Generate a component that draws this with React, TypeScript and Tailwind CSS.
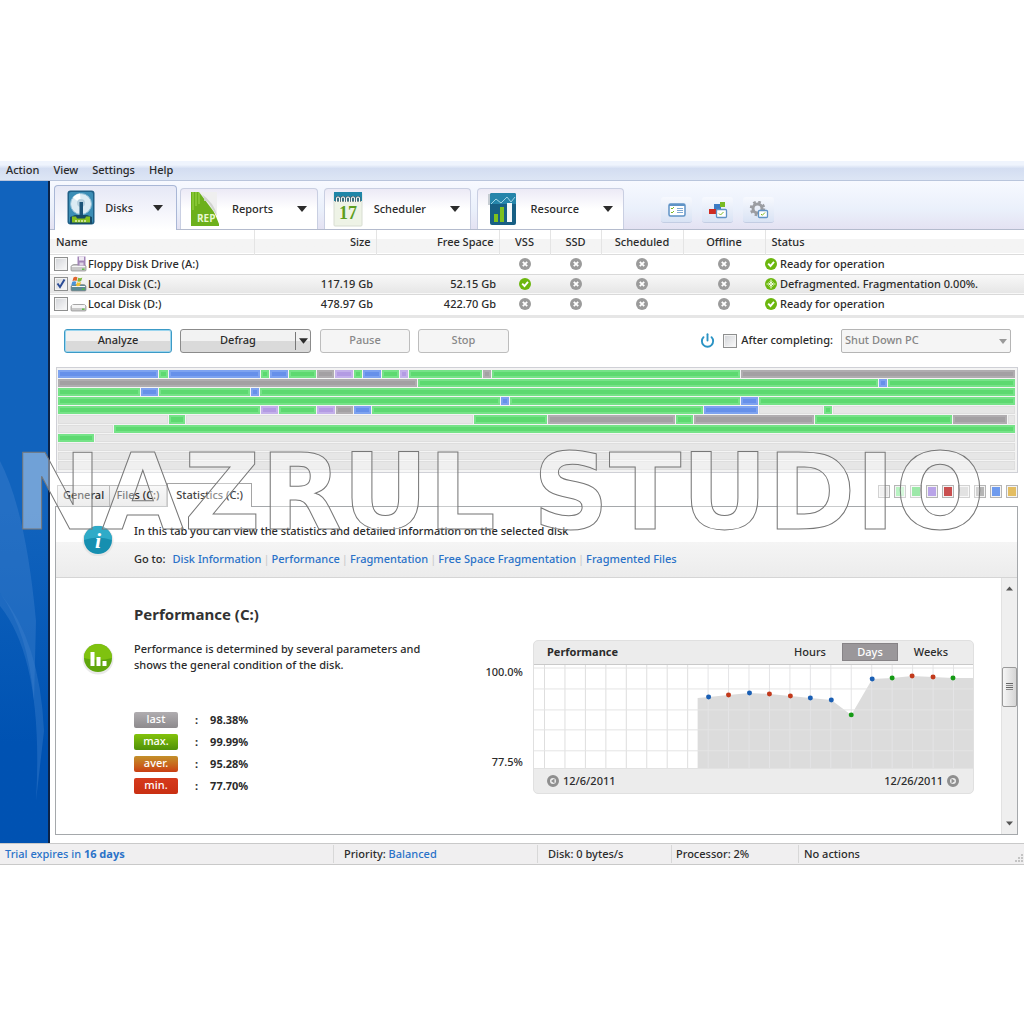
import type { ReactNode } from 'react';
import { Power } from 'lucide-react';

type Seg = [string, number];

const GREEN = 'bg-[#5dd970] shadow-[inset_0_0_0_2px_#76e388]';
const BLUE = 'bg-[#6690ea] shadow-[inset_0_0_0_2px_#7ea3f0]';
const GRAY = 'bg-[#a3a0a3] shadow-[inset_0_0_0_2px_#b0adb0]';
const PURPLE = 'bg-[#b39be3] shadow-[inset_0_0_0_2px_#c3b0ea]';
const EMPTY = 'bg-[#e6e6e6] shadow-[inset_0_0_0_1px_#dedede]';

const MAP_WIDTH = 956;

// each segment: colour, share of the row
const mapRows: Seg[][] = [
  [[BLUE, 101], [GREEN, 10], [BLUE, 92], [GREEN, 9], [BLUE, 19], [GREEN, 27], [GRAY, 18], [PURPLE, 19], [GREEN, 9], [BLUE, 19], [GREEN, 18], [PURPLE, 9], [GREEN, 74], [GRAY, 9], [GREEN, 249], [GRAY, 274]],
  [[GRAY, 359], [GREEN, 460], [BLUE, 9], [GREEN, 128]],
  [[GREEN, 83], [BLUE, 18], [GREEN, 92], [BLUE, 9], [GREEN, 754]],
  [[GREEN, 442], [BLUE, 9], [GREEN, 231], [BLUE, 18], [GREEN, 256]],
  [[GREEN, 203], [PURPLE, 18], [GREEN, 37], [PURPLE, 19], [GRAY, 18], [BLUE, 18], [GREEN, 332], [BLUE, 55], [EMPTY, 64], [GREEN, 9], [EMPTY, 183]],
  [[EMPTY, 111], [GREEN, 17], [EMPTY, 287], [GREEN, 74], [GRAY, 128], [GREEN, 18], [GRAY, 120], [GREEN, 138], [GRAY, 55], [EMPTY, 8]],
  [[EMPTY, 56], [GREEN, 900]],
  [[GREEN, 37], [EMPTY, 919]],
  [[EMPTY, 956]],
  [[EMPTY, 956]],
  [[EMPTY, 956]],
];

const disks = [
  { name: 'Floppy Disk Drive (A:)', size: '', free: '', vss: false, status: 'Ready for operation', kind: 'floppy' },
  { name: 'Local Disk (C:)', size: '117.19 Gb', free: '52.15 Gb', vss: true, status: 'Defragmented. Fragmentation 0.00%.', kind: 'system' },
  { name: 'Local Disk (D:)', size: '478.97 Gb', free: '422.70 Gb', vss: false, status: 'Ready for operation', kind: 'local' },
];

const stats = [
  { label: 'last', value: '98.38%', color: 'bg-linear-to-b from-[#b0adb0] to-[#8d8a8d]' },
  { label: 'max.', value: '99.99%', color: 'bg-linear-to-b from-[#83c30b] to-[#4f9108]' },
  { label: 'aver.', value: '95.28%', color: 'bg-linear-to-b from-[#c2902a] to-[#c93c12]' },
  { label: 'min.', value: '77.70%', color: 'bg-linear-to-b from-[#d63a1c] to-[#c92f12]' },
];

const legend = ['bg-[#e8e8e8]', 'bg-[#b9f3c3]', 'bg-[#5dd970]', 'bg-[#b9a4e8]', 'bg-[#c94f4f]', 'bg-[#cfcfcf]', 'bg-[#b5b5b5]', 'bg-[#6f9bee]', 'bg-[#e3bd62]'];

const points: [number, number, string][] = [
  [175, 32, '#1a5fb4'], [195, 30, '#c23a1c'], [216, 28, '#1a5fb4'], [236, 29, '#c23a1c'], [257, 31, '#c23a1c'], [277, 33, '#1a5fb4'], [298, 35, '#1a5fb4'],
  [318, 50, '#159a15'], [339, 14, '#1a5fb4'], [359, 13, '#159a15'], [379, 11, '#c23a1c'], [400, 12, '#c23a1c'], [420, 13, '#159a15'],
];

const links = ['Disk Information', 'Performance', 'Fragmentation', 'Free Space Fragmentation', 'Fragmented Files'];

function Check({ id, label, checked }: { id: string; label?: string; checked?: boolean }) {
  return (
    <span className="relative inline-flex h-[14px] w-[14px] shrink-0">
      <input id={id} type="checkbox" defaultChecked={checked} aria-label={label} className="peer h-[14px] w-[14px] appearance-none border border-[#8e8f8f] bg-linear-to-br from-[#d2d4d8] to-[#fbfbfb] shadow-[inset_0_0_0_1px_#f4f4f4]" />
      <svg viewBox="0 0 14 14" className="pointer-events-none absolute inset-0 hidden peer-checked:block">
        <path d="M3.5 6.5 6 10l4.5-7.5" fill="none" stroke="#2b4c96" strokeWidth="2" />
      </svg>
    </span>
  );
}

function Cross() {
  return (
    <svg viewBox="0 0 12 12" className="mx-auto h-3 w-3">
      <circle cx="6" cy="6" r="6" fill="#9b9b9b" />
      <path d="M3.8 3.8l4.4 4.4M8.2 3.8 3.8 8.2" stroke="#fff" strokeWidth="1.8" />
    </svg>
  );
}

function Tick() {
  return (
    <svg viewBox="0 0 12 12" className="mx-auto h-3 w-3 shrink-0">
      <circle cx="6" cy="6" r="6" fill="#6cb70e" />
      <path d="M3.2 5.6 5.5 8 9 3.8" fill="none" stroke="#fff" strokeWidth="1.9" />
    </svg>
  );
}

function Defragged() {
  return (
    <svg viewBox="0 0 12 12" className="h-3 w-3 shrink-0">
      <circle cx="6" cy="6" r="6" fill="#6cb70e" />
      <path d="M6 1.5v9M1.5 6h9" stroke="#e4f5c8" strokeWidth="1.2" />
      <path d="M4.5 3.5 6 5l1.5-1.5M4.5 8.5 6 7l1.5 1.5M3.5 4.5 5 6 3.5 7.5M8.5 4.5 7 6l1.5 1.5" fill="none" stroke="#fff" strokeWidth=".8" />
    </svg>
  );
}

function DriveIcon({ kind }: { kind: string }) {
  return (
    <svg viewBox="0 0 17 16" className="h-4 w-[17px] shrink-0">
      <path d="M1 10.5Q2 8.5 4 8.5h9.5q2 0 2.5 2v3.5q0 1-1 1H2q-1 0-1-1z" fill={kind === 'system' ? '#5c8a94' : '#c9c9c9'} stroke="#8a8a8a" strokeWidth=".7" />
      <path d="M2 10.5h13" stroke="#f6f6f6" strokeWidth={kind === 'local' ? 3 : 1} />
      <path d="M12 13.2h2.5" stroke="#4fbf3a" strokeWidth="1.3" />
      {kind === 'floppy' && (
        <>
          <path d="M7.5.5h8v9h-8z" fill="#a386b8" />
          <path d="M9 .5h5v4H9z" fill="#f0ebf4" />
          <path d="M9.5 6.5h4v3h-4z" fill="#ddd3e4" />
        </>
      )}
      {kind === 'system' && (
        <>
          <path d="M3.5 1.5q2-1.5 4 0L6.5 5q-2-1-4 0z" fill="#e0642c" />
          <path d="M8.3 1.8q2 1 4-.3L11.2 5q-2 1.3-4 .3z" fill="#7fb93c" />
          <path d="M2.3 5.8q2-1 4 0L5.2 9.5q-2-1-4 0z" fill="#4a93d6" />
          <path d="M7 6.2q2 1 4-.3l-1 3.7q-2 1-4 .2z" fill="#f0c02e" />
        </>
      )}
    </svg>
  );
}

function DiskLogo() {
  return (
    <svg viewBox="0 0 28 36" className="h-9 w-7">
      <rect x=".5" y=".5" width="27" height="34" rx="3" fill="#1f5f86" />
      <rect x="2" y="2" width="24" height="31" rx="2" fill="#3b8db5" />
      <circle cx="14" cy="14" r="10.5" fill="#dcebf3" stroke="#8dbdd6" />
      <path d="M14 14 6 7.5A10.5 10.5 0 0 1 13 3.5z" fill="#fff" />
      <circle cx="14" cy="13" r="4" fill="#b7d0de" />
      <path d="M12.5 12H16v14h-3.5z" fill="#1c5478" />
      <path d="M3 27l5-2h12l5 2v7H3z" fill="#174b66" />
      <path d="M5 26.5h4l1 2h8l1-2h4v6H5z" fill="#86bf1c" />
      <path d="M8 31h12" stroke="#e2f0b0" strokeWidth="1.5" strokeDasharray="2 1" />
    </svg>
  );
}

function ReportLogo() {
  return (
    <svg viewBox="0 0 30 36" className="h-9 w-[30px]">
      <path d="M1 1h15l13 32v2H1z" fill="#6cb01c" />
      <path d="M3 1v18M6 1v14M9 1v12" stroke="#8dcc3b" strokeWidth="1.5" />
      <path d="M9 1h18v24z" fill="#efefef" />
      <path d="M9 1q6 4 5 9 3-1 6 4l7 11Q25 12 9 1z" fill="#d2d4d0" />
      <text x="7" y="31" fontSize="10" fontWeight="700" fill="#e8f7cf" fontFamily="Open Sans">REP</text>
    </svg>
  );
}

function CalendarLogo() {
  return (
    <svg viewBox="0 0 30 36" className="h-9 w-[30px]">
      <rect x="1" y="2" width="28" height="33" rx="1" fill="#eef3e6" stroke="#d8ddd2" />
      <path d="M1 1h28v9H1z" fill="#1f86a8" />
      {[5, 10, 15, 20, 25].map(x => <path key={x} d={`M${x - 1.5} 11V7q1.5-2 3 0v4`} fill="none" stroke="#41565c" strokeWidth="2.2" />)}
      {[5, 10, 15, 20, 25].map(x => <path key={x} d={`M${x - 1.5} 11V7q1.5-2 3 0v4`} fill="none" stroke="#f3f8f9" strokeWidth="1.1" />)}
      <text x="15" y="28" textAnchor="middle" fontSize="18" fontWeight="700" fill="#5d9f1f" fontFamily="Liberation Serif">17</text>
    </svg>
  );
}

function ResourceLogo() {
  return (
    <svg viewBox="0 0 28 34" className="h-[34px] w-7">
      <path d="M0 2h4v11H0z" fill="#c6ccd2" />
      <rect x="2" y="1" width="26" height="32" rx="2" fill="#175f84" />
      <path d="M2 3q0-2 2-2h22q2 0 2 2v9H2z" fill="#2585aa" />
      <path d="M3 12l5-5 5 4 6-6 4 5 4-5" fill="none" stroke="#9fd4e6" />
      <path d="M6 22h4v8H6zM12 15h4v15h-4z" fill="#7cc01e" />
      <path d="M19 11h5v19h-5z" fill="#f3f8fa" />
    </svg>
  );
}

function Caret({ className }: { className: string }) {
  return <svg viewBox="0 0 10 6" className={className}><path d="M0 0h10L5 6z" fill="currentColor" /></svg>;
}

function MainTab({ label, icon, active, className }: { label: string; icon: ReactNode; active?: boolean; className: string }) {
  return (
    <button role="tab" aria-selected={!!active} className={`flex items-center rounded-t-[4px] border border-b-0 ${className} ${active ? 'z-10 -mb-px h-[45px] border-[#a9b7d6] bg-linear-to-b from-[#e6e8f6] to-white' : 'h-[41px] border-[#c9cfe2] bg-linear-to-b from-[#eceaf6] to-white to-50%'}`}>
      {icon}
      <span className="ml-auto flex items-center">{label}<Caret className={active ? 'ml-5 h-[6px] w-[10px]' : 'ml-6 h-[6px] w-[10px]'} /></span>
    </button>
  );
}

function ToolButton({ label, children }: { label: string; children: ReactNode }) {
  return (
    <button aria-label={label} className="flex h-[26px] w-[31px] items-center justify-center rounded-[3px] border-b border-[#c3cde3] bg-linear-to-b from-[#f7f9fe] to-[#d9e3f4]">
      <svg viewBox="0 0 20 18" className="h-[18px] w-5">{children}</svg>
    </button>
  );
}

function MenuBar() {
  return (
    <nav className="flex h-5 items-center gap-[14px] border-b border-[#b9c5dc] bg-linear-to-b from-[#eff4fd] from-20% via-[#d3ddf1] via-40% to-[#dde6f5] px-[6px] pb-[2px]">
      {['Action', 'View', 'Settings', 'Help'].map(m => <button key={m} className="leading-4">{m}</button>)}
    </nav>
  );
}

function Tabs() {
  return (
    <div className="flex h-[49px] items-end border-b border-[#b4bbcd] bg-linear-to-b from-[#f7f9ff] via-[#eaf0fb] via-60% to-[#e4e2f2] pl-1">
      <div role="tablist" className="flex items-end">
        <MainTab label="Disks" icon={<DiskLogo />} active className="w-[123px] pr-[13px] pl-3" />
        <MainTab label="Reports" icon={<ReportLogo />} className="ml-[3px] w-[138px] pr-[10px] pl-[9px]" />
        <MainTab label="Scheduler" icon={<CalendarLogo />} className="ml-[6px] w-[147px] pr-[10px] pl-[8px]" />
        <MainTab label="Resource" icon={<ResourceLogo />} className="ml-[6px] w-[147px] pr-[10px] pl-[10px]" />
      </div>
      <div className="mb-[6px] ml-[37px] flex gap-[10px]">
        <ToolButton label="Tasks">
          <rect x="2" y="3" width="16" height="12" rx="1.5" fill="#fff" stroke="#5f93c6" strokeWidth="1.5" />
          <path d="M2 4h16" stroke="#5f93c6" strokeWidth="2" />
          <path d="M4 7l1 1 2-2M4 11l1 1 2-2" fill="none" stroke="#7db928" />
          <path d="M10 7.5h6M10 9.5h6M10 11.5h6" stroke="#7fa9d3" />
        </ToolButton>
        <ToolButton label="Map settings">
          <path d="M6 3h7v7H6z" fill="#3d7cc4" />
          <path d="M12 1h5v5h-5z" fill="#79bb22" />
          <path d="M1 8h7v5H1z" fill="#cf2c22" />
          <rect x="8.5" y="8.5" width="10" height="8" rx="1" fill="#fff" stroke="#5f93c6" strokeWidth="1.3" />
          <path d="M11 12.5l1.5 1.5 3-3" fill="none" stroke="#7db928" />
        </ToolButton>
        <ToolButton label="Options">
          <circle cx="8.5" cy="7.5" r="4.5" fill="none" stroke="#9b9da2" strokeWidth="3" />
          <circle cx="8.5" cy="7.5" r="6.5" fill="none" stroke="#9b9da2" strokeWidth="2.5" strokeDasharray="2.6 2.5" />
          <rect x="9.5" y="9.5" width="9" height="7" rx="1" fill="#fff" stroke="#5f93c6" strokeWidth="1.3" />
          <path d="M12 13l1.3 1.3L16 11.5" fill="none" stroke="#7db928" />
        </ToolButton>
      </div>
    </div>
  );
}

function DiskTable() {
  const th = 'border-r border-[#e4e4e4] font-medium';
  return (
    <table className="w-full table-fixed border-collapse border-b-3 border-[#e6e6e6]">
      <colgroup>
        <col className="w-[204px]" /><col className="w-[122px]" /><col className="w-[123px]" /><col className="w-[51px]" /><col className="w-[51px]" /><col className="w-[82px]" /><col className="w-[82px]" /><col />
      </colgroup>
      <thead>
        <tr className="h-6 border-b border-[#dcdcdc] bg-linear-to-b from-white from-40% to-[#f4f4f4] to-40%">
          <th className={`${th} pl-[6px] text-left`}>Name</th>
          <th className={`${th} pr-[5px] text-right`}>Size</th>
          <th className={`${th} pr-[5px] text-right`}>Free Space</th>
          <th className={th}>VSS</th>
          <th className={th}>SSD</th>
          <th className={th}>Scheduled</th>
          <th className={th}>Offline</th>
          <th className="pl-[6px] text-left font-medium">Status</th>
        </tr>
      </thead>
      <tbody>
        {disks.map((d, i) => (
          <tr key={d.name} className={i === 1 ? 'h-5 border-y border-[#d9d9d9] bg-linear-to-b from-[#f8f8f8] to-[#e6e6e6]' : 'h-5'}>
            <td className="pl-1">
              <div className="flex items-center">
                <Check id={`disk-${i}`} label={d.name} checked={i === 1} />
                <span className="mr-px ml-[2px]"><DriveIcon kind={d.kind} /></span>
                {d.name}
              </div>
            </td>
            <td className="pr-[3px] text-right">{d.size}</td>
            <td className="pr-[3px] text-right">{d.free}</td>
            <td>{d.vss ? <Tick /> : <Cross />}</td>
            <td><Cross /></td>
            <td><Cross /></td>
            <td><Cross /></td>
            <td><div className="flex items-center gap-[3px]"><span>{i === 1 ? <Defragged /> : <Tick />}</span>{d.status}</div></td>
          </tr>
        ))}
        <tr className="h-[2px]"><td colSpan={8} /></tr>
      </tbody>
    </table>
  );
}

function Toolbar() {
  const btn = 'h-6 rounded-[3px] border bg-linear-to-b from-[#f2f2f2] from-50% to-[#dadada] to-50%';
  return (
    <div className="flex items-center pt-[11px] pr-[13px] pb-[14px] pl-[14px]">
      <button className={`${btn} w-[108px] border-[#3c9ac6] shadow-[inset_0_0_0_1px_#9bd5ee]`}>Analyze</button>
      <div className={`${btn} ml-2 flex w-[131px] items-center border-[#8b8b8b]`}>
        <button className="h-full flex-1">Defrag</button>
        <button aria-label="Defrag options" className="flex h-[18px] w-[15px] items-center justify-center border-l border-[#777]"><Caret className="h-[6px] w-[9px]" /></button>
      </div>
      <button disabled className="ml-[9px] h-6 w-[90px] rounded-[3px] border border-[#bdbdbd] bg-[#f5f5f5] text-[#888]">Pause</button>
      <button disabled className="ml-2 h-6 w-[91px] rounded-[3px] border border-[#bdbdbd] bg-[#f5f5f5] text-[#888]">Stop</button>
      <div className="ml-auto flex items-center">
        <Power size={15} strokeWidth={3} className="mr-2 text-[#2a93c4]" />
        <Check id="after" />
        <label htmlFor="after" className="ml-1">After completing:</label>
        <div className="relative ml-2">
          <select disabled aria-label="Action after completing" className="h-6 w-[170px] appearance-none rounded-[2px] border border-[#b5b5b5] bg-[#f5f5f5] pl-[3px] text-[#858585] opacity-100">
            <option>Shut Down PC</option>
          </select>
          <Caret className="pointer-events-none absolute top-[10px] right-1 h-[5px] w-2 text-[#999]" />
        </div>
      </div>
    </div>
  );
}

function ClusterMap() {
  return (
    <div className="mr-[6px] ml-[6px] flex h-[106px] flex-col border border-[#cfd0d6] bg-[#f4f4f4] px-px pt-[2px] pb-px">
      {mapRows.map((row, i) => (
        <div key={i} className="flex flex-1 pb-px">
          {row.map(([color, n], j) => (
            <div key={j} className="pr-px" style={{ width: `${(n / MAP_WIDTH) * 100}%` }}>
              <div className={`h-full ${color}`} />
            </div>
          ))}
        </div>
      ))}
    </div>
  );
}

function DetailTabs() {
  return (
    <div className="flex h-[33px] items-end pr-[6px] pl-[7px]">
      <div role="tablist" className="flex items-end">
        <button role="tab" className="h-[21px] w-[53px] border border-b-0 border-[#b9b9b9] bg-linear-to-b from-[#f4f4f4] to-[#e2e2e2]">General</button>
        <button role="tab" className="h-[21px] w-[57px] border border-b-0 border-l-0 border-[#b9b9b9] bg-linear-to-b from-[#f4f4f4] to-[#e2e2e2]">Files (C:)</button>
        <button role="tab" aria-selected className="z-10 -mb-px h-6 w-[85px] border border-b-0 border-[#a5a5a5] bg-white text-[#444]">Statistics (C:)</button>
      </div>
      <div className="mb-2 ml-auto flex gap-1">
        {legend.map(c => <span key={c} className={`h-[13px] w-3 border border-[#b5b5b5] shadow-[inset_0_0_0_1px_#f4f4f4] ${c}`} />)}
      </div>
    </div>
  );
}

function Chart() {
  const line = points.map(([x, y]) => `L${x} ${y}`).join(' ');
  return (
    <div className="flex flex-1 gap-[10px]">
      <div className="flex h-[131px] w-[42px] flex-col justify-between pt-6 text-right">
        <span>100.0%</span>
        <span>77.5%</span>
      </div>
      <div className="flex-1 rounded-[5px] border border-[#e0e0e0] bg-[#ececec]">
        <div className="flex h-6 items-center border-b border-[#c9c9c9] pr-[11px] pl-[13px]">
          <h3 className="flex-1 font-bold">Performance</h3>
          <button className="w-[60px]">Hours</button>
          <button className="mx-[2px] h-[18px] w-[56px] border border-[#868386] bg-[#9a979a] text-white">Days</button>
          <button className="w-[62px]">Weeks</button>
        </div>
        <svg viewBox="0 0 440 104" className="block w-full bg-white">
          <path d={`M164 33 ${line} L440 13V104H164z`} fill="#dcdcdc" />
          {Array.from({ length: 21 }, (_, i) => <path key={i} d={`M${10.5 + i * 20.5} 0V104`} stroke={i < 8 ? '#dedede' : '#e4e4e6'} />)}
          {[3, 24, 45, 65, 86].map(y => <path key={y} d={`M0 ${y}H440`} stroke="#e4e4e4" />)}
          {points.map(([x, y, c]) => <circle key={x} cx={x} cy={y} r="2.5" fill={c} />)}
        </svg>
        <div className="flex h-[25px] items-center justify-between border-t border-[#e2e2e2] pr-[14px] pl-[13px]">
          <button className="flex items-center gap-1">
            <svg viewBox="0 0 12 12" className="h-3 w-3"><circle cx="6" cy="6" r="4.5" fill="#eee" stroke="#8f8f8f" strokeWidth="3" /><path d="M7.5 3.5v5L4 6z" fill="#8f8f8f" /></svg>
            12/6/2011
          </button>
          <button className="flex items-center gap-1">
            12/26/2011
            <svg viewBox="0 0 12 12" className="h-3 w-3"><circle cx="6" cy="6" r="4.5" fill="#eee" stroke="#8f8f8f" strokeWidth="3" /><path d="M4.5 3.5v5L8 6z" fill="#8f8f8f" /></svg>
          </button>
        </div>
      </div>
    </div>
  );
}

function Scrollbar() {
  return (
    <div className="flex w-4 flex-col items-center border-l border-[#e2e2e2] bg-[#efefef] py-2 text-[#555]">
      <Caret className="h-[5px] w-[7px] rotate-180" />
      <div className="mt-[76px] flex h-10 w-[15px] flex-col items-center justify-center gap-px rounded-[2px] border border-[#9a9a9a] bg-linear-to-r from-[#f6f6f6] to-[#d5d5d5]">
        <i className="h-px w-[7px] bg-[#666]" /><i className="h-px w-[7px] bg-[#888]" /><i className="h-px w-[7px] bg-[#666]" /><i className="h-px w-[7px] bg-[#888]" />
      </div>
      <Caret className="mt-auto h-[5px] w-[7px]" />
    </div>
  );
}

function Details() {
  return (
    <section className="mr-[6px] mb-[6px] ml-[5px] border border-[#a5a8ab] bg-white">
      <div className="flex h-[71px] border-b border-[#d5d5d5] bg-linear-to-b from-white from-50% via-[#f5f5f5] via-50% to-[#ececec] pl-[26px]">
        <svg viewBox="0 0 32 32" className="mt-[17px] h-8 w-8">
          <circle cx="16" cy="17" r="15.5" fill="#e6e6e6" />
          <circle cx="16" cy="16" r="14" fill="#168fb0" />
          <path d="M2 16a14 14 0 0 1 28 0q-14-5-28 0z" fill="#2fabc8" />
          <text x="16" y="24" textAnchor="middle" fontSize="22" fontStyle="italic" fontWeight="700" fill="#fff" fontFamily="Liberation Serif">i</text>
        </svg>
        <div className="ml-5 pt-[15px]">
          <p className="leading-[18px]">In this tab you can view the statistics and detailed information on the selected disk</p>
          <p className="mt-[10px] flex leading-[18px]">
            <span className="mr-[7px]">Go to:</span>
            {links.map((l, i) => <span key={l}>{i > 0 && <span className="mx-[2px] text-[#ccc]">|</span>}<a href="#" className="text-[#2a72c8]">{l}</a></span>)}
          </p>
        </div>
      </div>
      <div className="flex h-[256px]">
        <div className="flex flex-1 pr-[27px] pl-[26px]">
          <svg viewBox="0 0 32 34" className="mt-[63px] h-[34px] w-8 shrink-0">
            <circle cx="16" cy="18" r="15.5" fill="#e9e9e9" />
            <circle cx="16" cy="17" r="14" fill="#5fa60c" />
            <path d="M2 17a14 14 0 0 1 28 0q-14 4-28 0z" fill="#7fc20f" />
            <path d="M8.5 11h4v14h-4zM14.5 16h4v9h-4zM20.5 20h4v5h-4z" fill="#fff" />
          </svg>
          <div className="ml-5 w-[308px] shrink-0 pt-[26px]">
            <h2 className="text-[15px] leading-5 font-bold text-[#333]">Performance (C:)</h2>
            <p className="mt-[17px] leading-4 whitespace-nowrap">Performance is determined by several parameters and<br />shows the general condition of the disk.</p>
            <dl className="mt-[39px] flex flex-col gap-[6px]">
              {stats.map(s => (
                <div key={s.label} className="flex items-center leading-4">
                  <dt className={`h-4 w-11 rounded-[2px] text-center leading-[14px] text-white ${s.color}`}>{s.label}</dt>
                  <dd className="flex font-bold"><span className="mr-3 ml-[17px]">:</span>{s.value}</dd>
                </div>
              ))}
            </dl>
          </div>
          <div className="ml-[39px] flex flex-1 items-start pt-[62px]"><Chart /></div>
        </div>
        <Scrollbar />
      </div>
    </section>
  );
}

function StatusBar() {
  return (
    <footer className="flex h-[22px] items-center border-t border-b border-[#c9c9c9] bg-[#f0eff0] leading-[18px]">
      <span className="w-[333px] pl-[5px] text-[#2a72c8]">Trial expires in <b>16 days</b></span>
      <span className="w-[204px] border-l border-[#d8d8d8] pl-[10px]">Priority: <a href="#" className="text-[#2a72c8]">Balanced</a></span>
      <span className="w-[134px] border-l border-[#d8d8d8] pl-[10px]">Disk: 0 bytes/s</span>
      <span className="w-[127px] border-l border-[#d8d8d8] pl-1">Processor: 2%</span>
      <span className="flex-1 border-l border-[#d8d8d8] pl-[5px]">No actions</span>
      <svg viewBox="0 0 8 8" className="mt-2 mr-px h-2 w-2"><path d="M6 0h2v2H6zM3 3h2v2H3zM6 3h2v2H6zM0 6h2v2H0zM3 6h2v2H3zM6 6h2v2H6z" fill="#c4c4c4" /></svg>
    </footer>
  );
}

export default function App() {
  return (
    <div className="min-h-screen bg-white pt-[161px] font-['Noto_Sans','Open_Sans',sans-serif] text-[11px] font-medium text-[#2b2b2b]">
      <div className="relative">
        <MenuBar />
        <div className="flex">
          <aside className="w-[50px] shrink-0 overflow-hidden border-r-2 border-[#0b2348] bg-linear-to-b from-[#1163bd] from-50% to-[#0052b2] to-85%">
            <svg viewBox="0 0 48 662" preserveAspectRatio="none" className="h-full w-full">
              <path d="M0 280Q26 330 36 440L34 520Q28 450 0 412z" fill="#3b7fcc" opacity=".45" />
              <path d="M0 412Q40 460 44 550L36 620Q44 480 0 425z" fill="#3b7fcc" opacity=".4" />
            </svg>
          </aside>
          <main className="min-w-0 flex-1">
            <Tabs />
            <DiskTable />
            <Toolbar />
            <ClusterMap />
            <DetailTabs />
            <Details />
          </main>
        </div>
        <StatusBar />
        <div className="pointer-events-none absolute inset-x-0 top-[272px] z-20 pr-[26px] text-center font-['DejaVu_Sans'] text-[106px] leading-[120px] font-bold whitespace-nowrap text-white/40 [-webkit-text-stroke:1px_#777]">NAZRUL STUDIO</div>
      </div>
    </div>
  );
}
